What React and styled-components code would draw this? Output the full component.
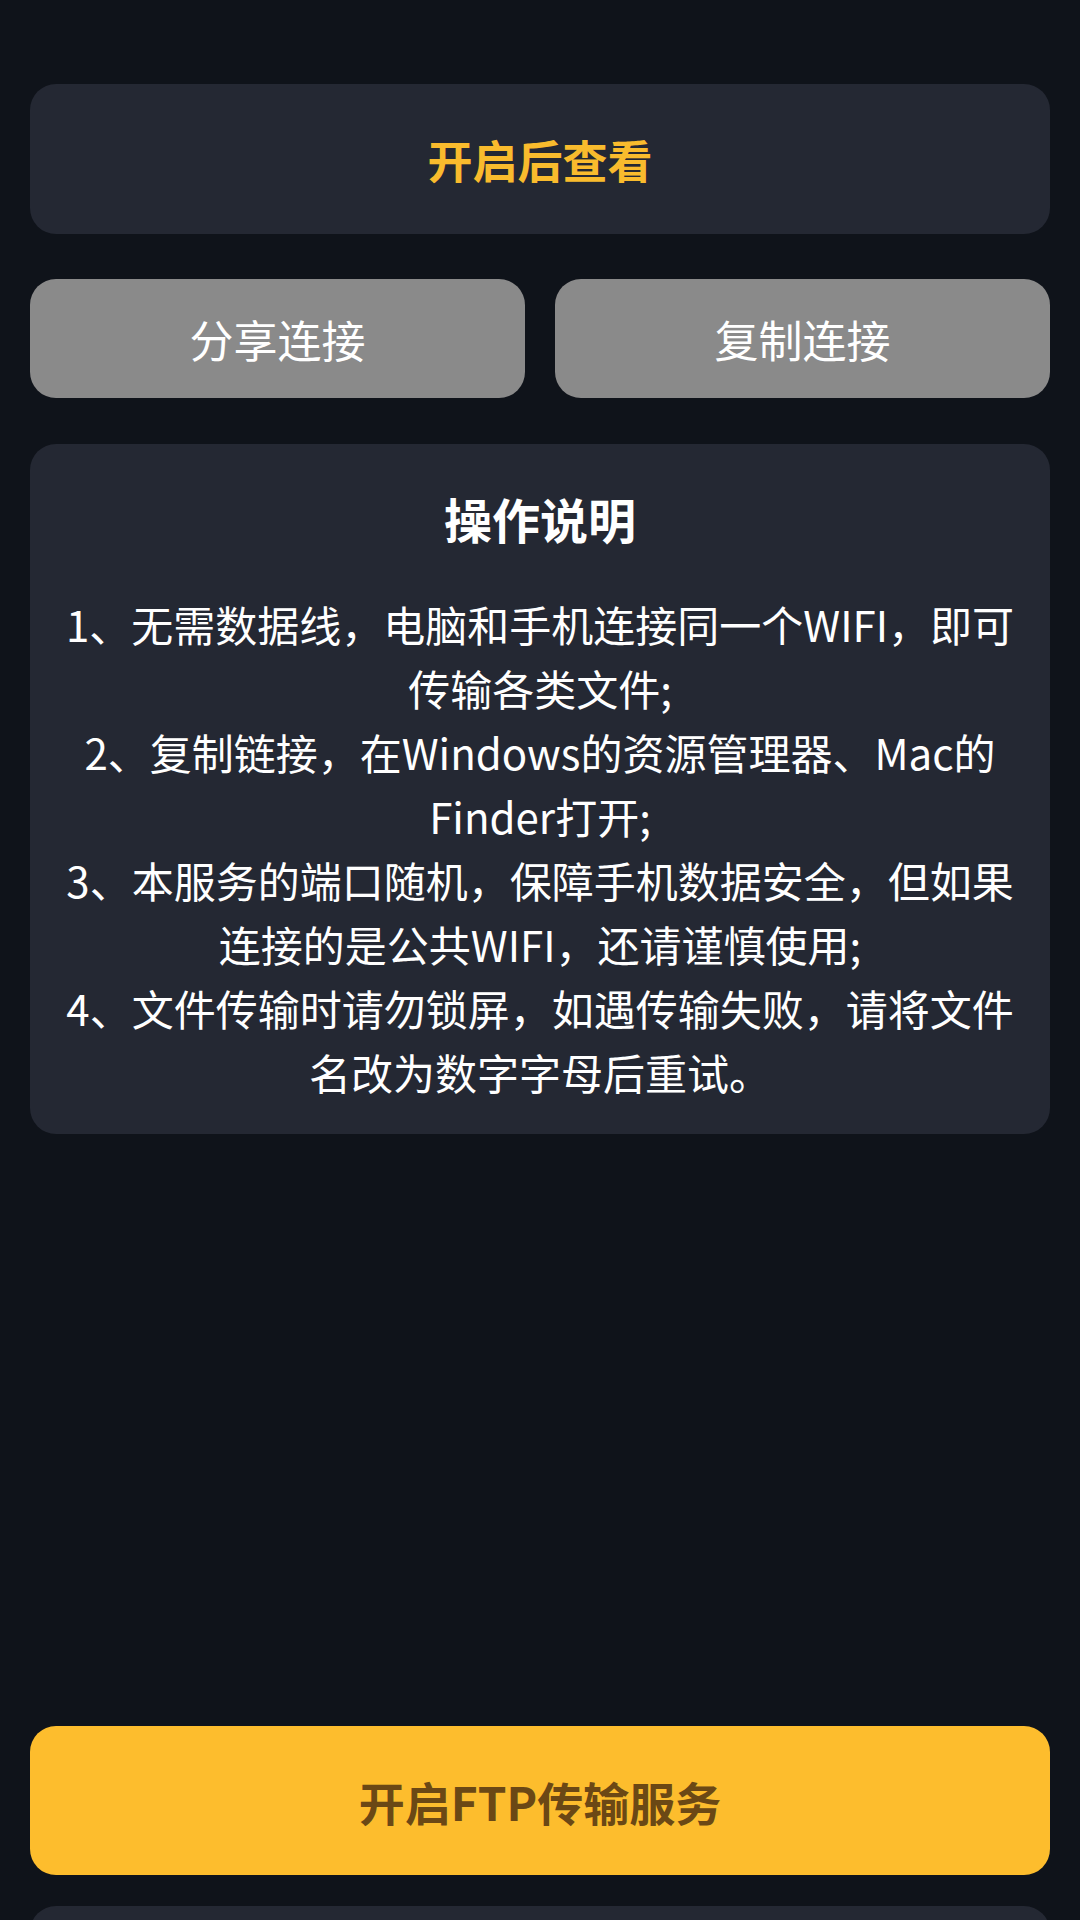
import React from "react";
import styled, { createGlobalStyle } from "styled-components";

const GlobalStyle = createGlobalStyle`
  html, body {
    margin: 0;
    padding: 0;
    background: #0f131a;
  }
  body {
    font-family: "Noto Sans CJK SC", "Noto Sans", sans-serif;
  }
`;

const Page = styled.div`
  height: 1920px;
  overflow: hidden;
  background: #0f131a;
  padding: 84px 30px 0;
  box-sizing: border-box;
  display: flex;
  flex-direction: column;
`;

const Card = styled.div`
  background: #242833;
  border-radius: 26px;
  flex-shrink: 0;
`;

const StatusCard = styled(Card)`
  height: 150px;
  display: flex;
  align-items: center;
  justify-content: center;
  color: #f9bb2d;
  font-size: 45px;
  font-weight: 700;
`;

const ButtonRow = styled.div`
  display: grid;
  grid-template-columns: 1fr 1fr;
  gap: 30px;
  margin-top: 45px;
`;

const GrayButton = styled.button`
  height: 119px;
  border: none;
  border-radius: 26px;
  background: #8a8a8a;
  color: #ffffff;
  font-family: inherit;
  font-size: 44px;
  font-weight: 400;
  cursor: pointer;
`;

const GuideCard = styled(Card)`
  margin-top: 46px;
  padding: 42px 16px 30px;
  text-align: center;
  color: #ffffff;
`;

const GuideTitle = styled.h2`
  margin: 0 0 42px;
  font-size: 48px;
  font-weight: 700;
  line-height: 64px;
`;

const GuideLine = styled.div`
  font-size: 42px;
  line-height: 64px;
  white-space: nowrap;
`;

const StartButton = styled.button`
  margin-top: 592px;
  height: 149px;
  flex-shrink: 0;
  border: none;
  border-radius: 26px;
  background: #fdbd2d;
  color: #6b4815;
  font-family: inherit;
  font-size: 46px;
  font-weight: 700;
  cursor: pointer;
`;

const NextCard = styled(Card)`
  margin-top: 31px;
  height: 160px;
`;

const guideLines = [
  "1、无需数据线，电脑和手机连接同一个WIFI，即可",
  "传输各类文件;",
  "2、复制链接，在Windows的资源管理器、Mac的",
  "Finder打开;",
  "3、本服务的端口随机，保障手机数据安全，但如果",
  "连接的是公共WIFI，还请谨慎使用;",
  "4、文件传输时请勿锁屏，如遇传输失败，请将文件",
  "名改为数字字母后重试。",
];

export default function App() {
  return (
    <>
      <GlobalStyle />
      <Page>
        <StatusCard>开启后查看</StatusCard>
        <ButtonRow>
          <GrayButton>分享连接</GrayButton>
          <GrayButton>复制连接</GrayButton>
        </ButtonRow>
        <GuideCard>
          <GuideTitle>操作说明</GuideTitle>
          {guideLines.map((line) => (
            <GuideLine key={line}>{line}</GuideLine>
          ))}
        </GuideCard>
        <StartButton>开启FTP传输服务</StartButton>
        <NextCard />
      </Page>
    </>
  );
}
